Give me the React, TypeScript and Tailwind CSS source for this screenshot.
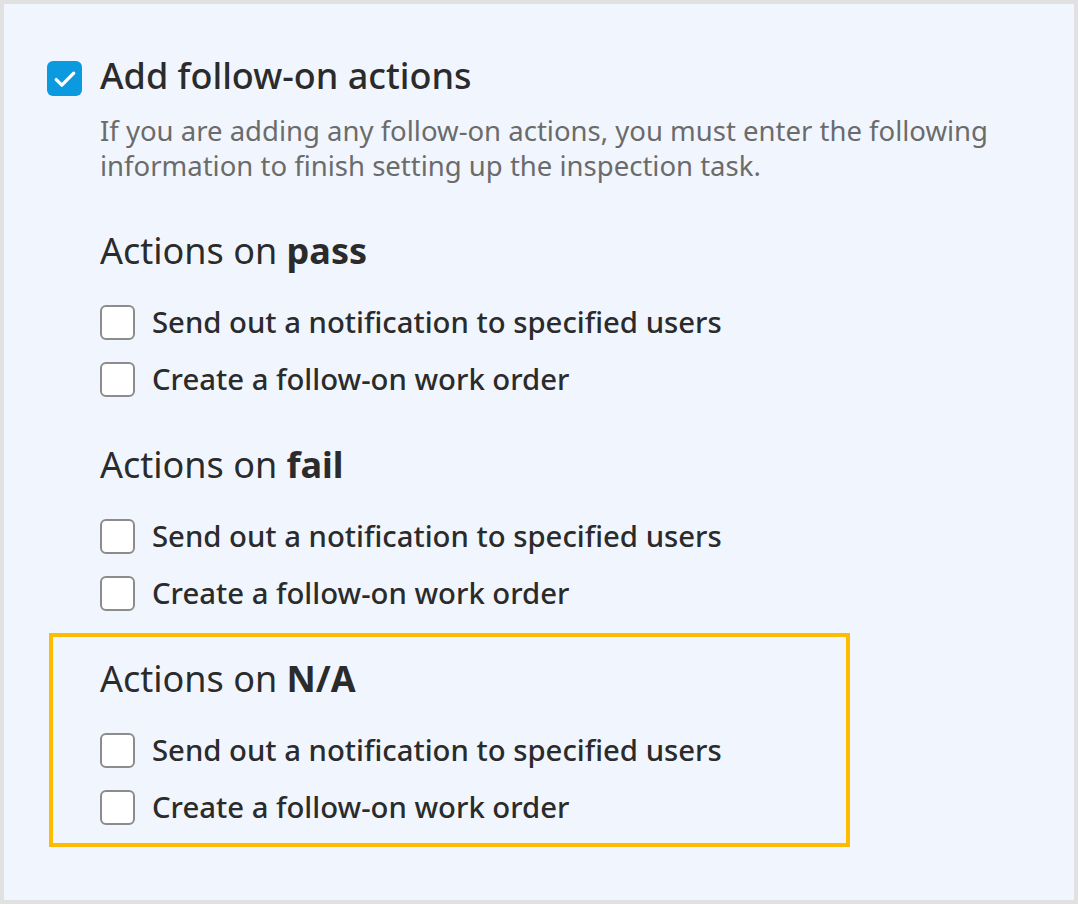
import { useState } from "react"

const sections = [
  { key: "pass", label: "pass" },
  { key: "fail", label: "fail" },
  { key: "na", label: "N/A" },
]

const options = ["Send out a notification to specified users", "Create a follow-on work order"]

function Box({ checked, onClick }: { checked: boolean; onClick: () => void }) {
  return (
    <button
      type="button"
      onClick={onClick}
      className={`w-[35px] h-[35px] shrink-0 rounded-[6px] flex items-center justify-center ${checked ? "bg-[#0b9ae0]" : "border-2 border-[#8c8c8c] bg-white"}`}
    >
      {checked && (
        <svg width="28" height="28" viewBox="0 0 24 24" fill="none">
          <path d="M4.5 12.5l4.8 4.8L19.5 7" stroke="white" strokeWidth="2.8" strokeLinecap="round" strokeLinejoin="round" />
        </svg>
      )}
    </button>
  )
}

export default function App() {
  const [enabled, setEnabled] = useState(true)
  const [picked, setPicked] = useState<Record<string, boolean>>({})

  return (
    <div className="w-[1078px] h-[904px] border-4 border-[#e1e1e1] bg-[#f1f6fe] font-['Noto_Sans',sans-serif] text-[#2b2b2b]">
      <div className="pt-[50px] pl-[43px]">
        <div className="flex items-start gap-[18px]">
          <div className="mt-[7px]">
            <Box checked={enabled} onClick={() => setEnabled(!enabled)} />
          </div>
          <h1 className="text-[36px] leading-[44px] font-medium">Add follow-on actions</h1>
        </div>
        <p className="ml-[53px] mt-[15px] w-[920px] text-[27.5px] leading-[35px] text-[#6b6b6b]">
          If you are adding any follow-on actions, you must enter the following information to finish setting up the inspection task.
        </p>

        <div className="ml-[2px] mt-[22px] w-[801px]">
          {sections.map((s) => (
            <div
              key={s.key}
              className={`border-4 pl-[47px] pt-[20px] pb-[18px] ${s.key === "na" ? "border-[#ffbb00]" : "border-transparent"}`}
            >
              <h2 className="text-[36px] leading-[44px]">
                Actions on <span className="font-bold">{s.label}</span>
              </h2>
              <div className="mt-[32px] flex flex-col gap-[22px]">
                {options.map((o) => {
                  const id = s.key + o
                  return (
                    <label key={o} className="flex items-center gap-[17px] cursor-pointer">
                      <Box checked={!!picked[id]} onClick={() => setPicked({ ...picked, [id]: !picked[id] })} />
                      <span className="text-[29.3px] leading-[35px] font-medium">{o}</span>
                    </label>
                  )
                })}
              </div>
            </div>
          ))}
        </div>
      </div>
    </div>
  )
}
